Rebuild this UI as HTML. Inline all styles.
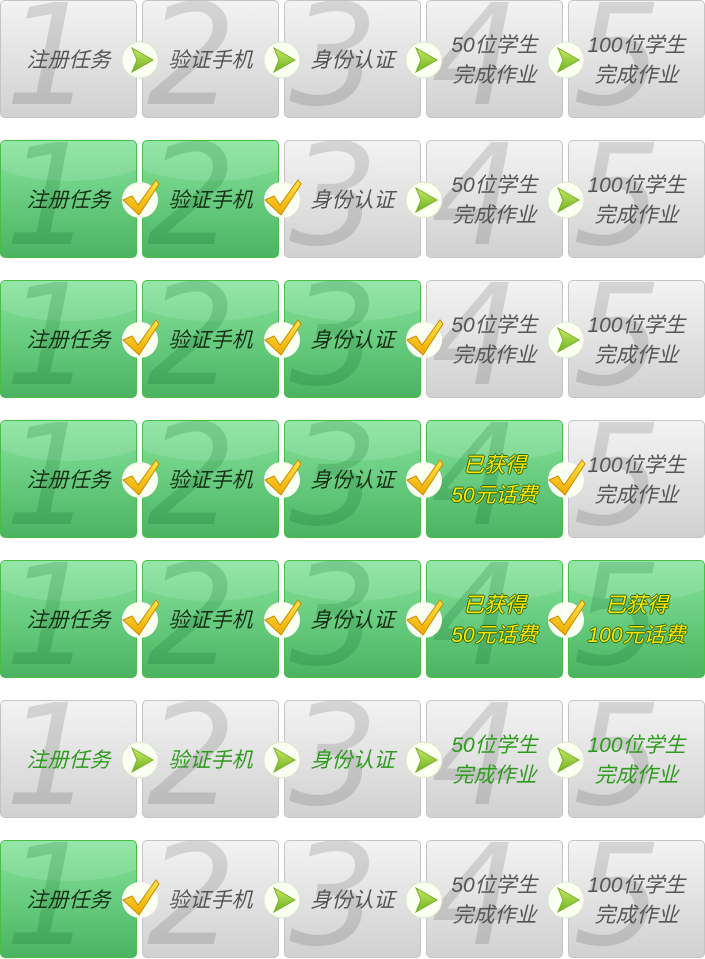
<!DOCTYPE html>
<html><head><meta charset="utf-8"><style>
body{margin:0;width:705px;height:959px;background:#fff;position:relative;overflow:hidden}
.t{position:absolute;width:135px;height:116px;border:1px solid #c4c4c4;border-radius:5px;background:linear-gradient(#f3f3f3,#d1d1d1);overflow:hidden}
.t i{position:absolute;left:4px;top:-14px;font:italic 140px/1 "DejaVu Sans",sans-serif;color:rgba(0,0,0,.12)}
.t span{position:absolute;left:0;right:0;top:4px;bottom:0;display:flex;align-items:center;justify-content:center;text-align:center;font:italic 21px/30px "Liberation Sans","Noto Sans CJK SC",sans-serif;color:#555;letter-spacing:0}
.g{background:linear-gradient(#86e49c,#4bb463);border-color:#48bd48}
.g::before{content:"";position:absolute;left:-40px;right:-40px;top:-60px;height:100px;border-radius:50%;background:rgba(255,255,255,.12)}
.g i{color:rgba(0,90,30,.18)}
.g span{color:#163016}
.y span{color:#ffe400;text-shadow:1px 0 #2b6b10,-1px 0 #2b6b10,0 1px #2b6b10,0 -1px #2b6b10}
.gt span{color:#2e9a1e}
.c{position:absolute;width:40px;height:40px}
</style></head><body>
<svg width="0" height="0" style="position:absolute"><defs>
<linearGradient id="ag" x1="0" y1="0" x2="0" y2="1"><stop offset="0" stop-color="#c6ea60"/><stop offset="1" stop-color="#6fb022"/></linearGradient>
<linearGradient id="cg" x1="0" y1="0" x2="0" y2="1"><stop offset="0" stop-color="#ffe84a"/><stop offset="1" stop-color="#f0a800"/></linearGradient>
<symbol id="A" viewBox="0 0 40 40"><circle cx="20" cy="20" r="18" fill="#fbfff2" stroke="#dde8cc"/><path d="M12 8 L33 20 L12 32 L17 20 Z" fill="url(#ag)" stroke="#79b02a" stroke-width="1"/></symbol>
<symbol id="C" viewBox="0 0 40 40"><circle cx="20" cy="22" r="18" fill="#fbfff2"/><path d="M3 22 L12 18 L18 27 L36 2 L39 6 L19 37 Z" fill="url(#cg)" stroke="#c88a00" stroke-width="1"/></symbol>
</defs></svg>

<div class="t" style="left:0;top:0"><i>1</i><span>注册任务</span></div>
<div class="t" style="left:142px;top:0"><i>2</i><span>验证手机</span></div>
<div class="t" style="left:284px;top:0"><i>3</i><span>身份认证</span></div>
<div class="t" style="left:426px;top:0"><i>4</i><span>50位学生<br>完成作业</span></div>
<div class="t" style="left:568px;top:0"><i>5</i><span>100位学生<br>完成作业</span></div>
<svg class="c" style="left:120px;top:40px"><use href="#A"/></svg>
<svg class="c" style="left:262px;top:40px"><use href="#A"/></svg>
<svg class="c" style="left:404px;top:40px"><use href="#A"/></svg>
<svg class="c" style="left:546px;top:40px"><use href="#A"/></svg>

<div class="t g" style="left:0;top:140px"><i>1</i><span>注册任务</span></div>
<div class="t g" style="left:142px;top:140px"><i>2</i><span>验证手机</span></div>
<div class="t" style="left:284px;top:140px"><i>3</i><span>身份认证</span></div>
<div class="t" style="left:426px;top:140px"><i>4</i><span>50位学生<br>完成作业</span></div>
<div class="t" style="left:568px;top:140px"><i>5</i><span>100位学生<br>完成作业</span></div>
<svg class="c" style="left:120px;top:178px"><use href="#C"/></svg>
<svg class="c" style="left:262px;top:178px"><use href="#C"/></svg>
<svg class="c" style="left:404px;top:180px"><use href="#A"/></svg>
<svg class="c" style="left:546px;top:180px"><use href="#A"/></svg>

<div class="t g" style="left:0;top:280px"><i>1</i><span>注册任务</span></div>
<div class="t g" style="left:142px;top:280px"><i>2</i><span>验证手机</span></div>
<div class="t g" style="left:284px;top:280px"><i>3</i><span>身份认证</span></div>
<div class="t" style="left:426px;top:280px"><i>4</i><span>50位学生<br>完成作业</span></div>
<div class="t" style="left:568px;top:280px"><i>5</i><span>100位学生<br>完成作业</span></div>
<svg class="c" style="left:120px;top:318px"><use href="#C"/></svg>
<svg class="c" style="left:262px;top:318px"><use href="#C"/></svg>
<svg class="c" style="left:404px;top:318px"><use href="#C"/></svg>
<svg class="c" style="left:546px;top:320px"><use href="#A"/></svg>

<div class="t g" style="left:0;top:420px"><i>1</i><span>注册任务</span></div>
<div class="t g" style="left:142px;top:420px"><i>2</i><span>验证手机</span></div>
<div class="t g" style="left:284px;top:420px"><i>3</i><span>身份认证</span></div>
<div class="t g y" style="left:426px;top:420px"><i>4</i><span>已获得<br>50元话费</span></div>
<div class="t" style="left:568px;top:420px"><i>5</i><span>100位学生<br>完成作业</span></div>
<svg class="c" style="left:120px;top:458px"><use href="#C"/></svg>
<svg class="c" style="left:262px;top:458px"><use href="#C"/></svg>
<svg class="c" style="left:404px;top:458px"><use href="#C"/></svg>
<svg class="c" style="left:546px;top:458px"><use href="#C"/></svg>

<div class="t g" style="left:0;top:560px"><i>1</i><span>注册任务</span></div>
<div class="t g" style="left:142px;top:560px"><i>2</i><span>验证手机</span></div>
<div class="t g" style="left:284px;top:560px"><i>3</i><span>身份认证</span></div>
<div class="t g y" style="left:426px;top:560px"><i>4</i><span>已获得<br>50元话费</span></div>
<div class="t g y" style="left:568px;top:560px"><i>5</i><span>已获得<br>100元话费</span></div>
<svg class="c" style="left:120px;top:598px"><use href="#C"/></svg>
<svg class="c" style="left:262px;top:598px"><use href="#C"/></svg>
<svg class="c" style="left:404px;top:598px"><use href="#C"/></svg>
<svg class="c" style="left:546px;top:598px"><use href="#C"/></svg>

<div class="t gt" style="left:0;top:700px"><i>1</i><span>注册任务</span></div>
<div class="t gt" style="left:142px;top:700px"><i>2</i><span>验证手机</span></div>
<div class="t gt" style="left:284px;top:700px"><i>3</i><span>身份认证</span></div>
<div class="t gt" style="left:426px;top:700px"><i>4</i><span>50位学生<br>完成作业</span></div>
<div class="t gt" style="left:568px;top:700px"><i>5</i><span>100位学生<br>完成作业</span></div>
<svg class="c" style="left:120px;top:740px"><use href="#A"/></svg>
<svg class="c" style="left:262px;top:740px"><use href="#A"/></svg>
<svg class="c" style="left:404px;top:740px"><use href="#A"/></svg>
<svg class="c" style="left:546px;top:740px"><use href="#A"/></svg>

<div class="t g" style="left:0;top:840px"><i>1</i><span>注册任务</span></div>
<div class="t" style="left:142px;top:840px"><i>2</i><span>验证手机</span></div>
<div class="t" style="left:284px;top:840px"><i>3</i><span>身份认证</span></div>
<div class="t" style="left:426px;top:840px"><i>4</i><span>50位学生<br>完成作业</span></div>
<div class="t" style="left:568px;top:840px"><i>5</i><span>100位学生<br>完成作业</span></div>
<svg class="c" style="left:120px;top:878px"><use href="#C"/></svg>
<svg class="c" style="left:262px;top:880px"><use href="#A"/></svg>
<svg class="c" style="left:404px;top:880px"><use href="#A"/></svg>
<svg class="c" style="left:546px;top:880px"><use href="#A"/></svg>
</body></html>
